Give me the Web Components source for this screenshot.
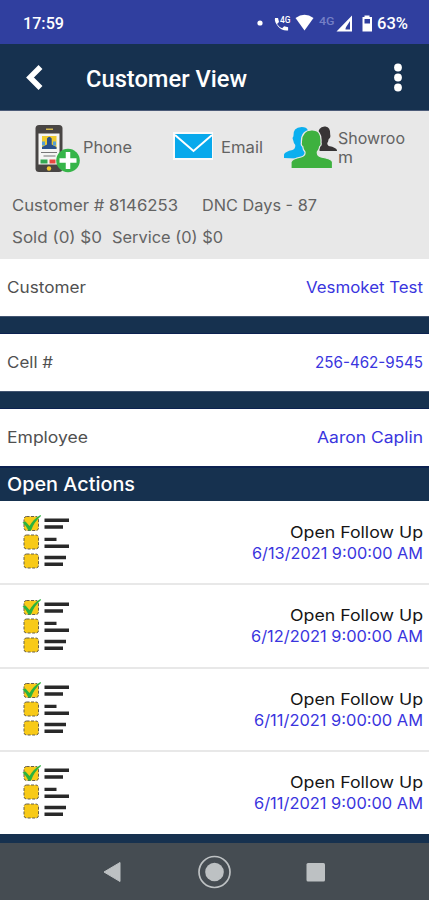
<!DOCTYPE html>
<html lang="en">
<head>
<meta charset="utf-8">
<title>Customer View</title>
<style>
html,body{margin:0;padding:0;background:#16314f}
body{width:429px;height:900px;overflow:hidden;font-family:Inter,"Liberation Sans",sans-serif}
</style>
</head>
<body>
<customer-screen></customer-screen>
<script>
function define(name, html, setup) {
  const t = document.createElement('template');
  t.innerHTML = html;
  customElements.define(name, class extends HTMLElement {
    connectedCallback() {
      if (this.shadowRoot) return;
      this.attachShadow({mode: 'open'}).append(t.content.cloneNode(true));
      if (setup) setup(this, this.shadowRoot);
    }
  });
}

// A single line whose letters are widened to fill the width given in "w".
define('tracked-text', `<style>:host{display:block;white-space:pre;flex:none}span{display:inline-block;transform-origin:0 50%}</style><span></span>`, (el, root) => {
  const s = root.querySelector('span'), w = +el.getAttribute('w');
  s.textContent = el.getAttribute('text');
  const natural = s.getBoundingClientRect().width;
  el.style.width = w + 'px';
  s.style.transform = 'scaleX(' + (w / natural).toFixed(4) + ')';
});

define('status-bar', `<style>
:host{display:flex;height:44px;box-sizing:border-box;background:#303f9f;color:#fff;align-items:center;padding:2px 21px 0 23px;font:500 17px/20px Roboto,sans-serif}
svg{margin-left:auto;display:block}
</style><tracked-text text="17:59" w="41"></tracked-text>
<svg width="116" height="24" viewBox="257 10 116 24" fill="#fff">
<circle cx="260" cy="22" r="2.6"/>
<path d="M275 17l3 .1 1 4-2 1.800q2 3 5.200 4.400l1.900-2 4 1v3.200q-6 .8-10-4t-3.100-8.500z"/>
<text x="280" y="22" font-size="9.500" font-weight="500" textLength="10.500" lengthAdjust="spacingAndGlyphs">4G</text>
<path d="M295.500 17q9-6.500 18 0l-9 12.500z"/>
<text x="319" y="23.500" font-size="11" font-weight="500" fill="#7580c6" textLength="15.500" lengthAdjust="spacingAndGlyphs">4G</text>
<path fill-rule="evenodd" d="M352 14.500v16h-15.500zM350 20l-5.500 8.500h5.500z"/><path d="M345.500 23v6h-4z"/>
<path fill-rule="evenodd" d="M364.500 16v-1.500h5V16h2.500v14.500h-9.500V16zM364.500 18v4.500h5.500V18z"/>
</svg><tracked-text text="63%" w="31" style="margin-left:4px"></tracked-text>`);

define('app-header', `<style>
:host{display:flex;height:67px;box-sizing:border-box;background:#16314f;color:#fff;align-items:center;padding:2px 24px 0 25px;border-bottom:1px solid #4b5b78;font:500 23px/30px Roboto,sans-serif}
svg{display:block}.dots{margin-left:auto}
</style><svg width="20" height="28" viewBox="0 0 20 28"><path d="M15.500 3L5 13.500l10.500 10.500" fill="none" stroke="#fff" stroke-width="5.500"/></svg>
<tracked-text text="Customer View" w="161" style="margin-left:41px;padding-top:3px"></tracked-text>
<svg class="dots" width="14" height="32" viewBox="0 0 14 32" fill="#fff"><circle cx="7" cy="5.500" r="3.900"/><circle cx="7" cy="15.500" r="3.900"/><circle cx="7" cy="25.500" r="3.900"/></svg>`);

define('contact-action', `<style>:host{display:flex;align-items:center;color:#636363}</style><slot name="icon"></slot><slot></slot>`);

define('customer-summary', `<style>
:host{display:block;height:148px;background:#e8e8e8;box-sizing:border-box;padding-top:9px;color:#636363;font-size:15.500px;line-height:20px}
.actions{display:grid;grid-template-columns:139px 138px 152px;height:55px}
svg{display:block;flex:none}
.line{display:flex;padding-left:12px;height:32px;align-items:center}
.first{margin-top:15px}
</style>
<div class="actions">
<contact-action><svg slot="icon" width="49" height="52" viewBox="0 0 49 52" style="margin:0 0 0 34px">
<rect x="1.500" y="3" width="27" height="47" rx="3.500" fill="#484544"/><rect x="4.500" y="11.500" width="21" height="31" fill="#f5f5f3"/><rect x="12" y="6.500" width="7" height="1.500" fill="#d6bb51"/>
<rect x="8" y="14" width="14.500" height="13" fill="#efca2d"/><path d="M8 27v-2l5-2.500v-6q2.300-3.500 4.700 0v6l4.800 2.500v2z" fill="#28508b"/><path d="M8 19.500h3v4H8zm11 0h3v4h-3z" fill="#559fd4"/>
<path d="M7 30.500h16M9.500 34h12" stroke="#777" stroke-width="1.200"/><path d="M6.500 37.500h7v4h-7z" fill="#34a853"/><path d="M15.500 37.500h6v4h-6z" fill="#e74940"/><circle cx="15" cy="46.500" r="2.200" fill="#f5c931"/>
<circle cx="34" cy="38.500" r="11.800" fill="#36b549"/><path d="M34 30v17M25.500 38.500h17" stroke="#fff" stroke-width="4.500"/>
</svg><tracked-text text="Phone" w="49"></tracked-text></contact-action>
<contact-action><svg slot="icon" width="40" height="28" viewBox="0 0 40 28" style="margin:-3px 8px 0 34px"><rect width="40" height="28" fill="#fafafa"/><rect x="2" y="2" width="37" height="24" fill="#08a9ec"/><path d="M2 3l18.500 16L39 3" fill="none" stroke="#fff" stroke-width="2"/></svg><tracked-text text="Email" w="42"></tracked-text></contact-action>
<contact-action><svg slot="icon" width="54" height="44" viewBox="0 0 54 44" style="margin:5px 0 0 6px;align-self:flex-start">
<path fill="#0bafef" d="M1 33v-3.500q1-3 8.500-4.500 3-1 2.800-5-1.800-2-1.900-4l-.8-2.500q0-1.500.8-2-.8-9.300 8.300-9.500 5 0 6 3 2 .5 1.500 7l-4 22.500Q18 32.500 13 33.500z"/>
<path fill="#383536" d="M36 25V8q-1-2 .5-4 2-3 6-2.500 5 .6 4.700 8 .8 3-1.500 4.500-.5 3-1.500 4 0 2 1.500 3 8 1.500 8.300 4.500V26H37z"/>
<path fill="#3eb13f" stroke="#e8e8e8" stroke-width="1.200" d="M8 43.500V37q1-3 10-5 4.500-1 4-5-2-2-2.300-5.500-2-1-1.300-4Q18 5.500 28.500 5T38 17.500q.8 3-1.300 4-.4 3.500-2.400 5.500-.3 4 3.700 5 11 2 11.500 5v6.500z"/>
</svg><div style="padding-left:1px"><tracked-text text="Showroo" w="67" style="height:19px;line-height:19px"></tracked-text><tracked-text text="m" w="15" style="height:19px;line-height:19px"></tracked-text></div></contact-action>
</div>
<div class="line first"><tracked-text text="Customer # 8146253" w="166"></tracked-text><tracked-text text="DNC Days - 87" w="115" style="margin-left:24px"></tracked-text></div>
<div class="line"><tracked-text text="Sold (0) $0" w="90"></tracked-text><tracked-text text="Service (0) $0" w="111" style="margin-left:10px"></tracked-text></div>`);

define('field-row', `<style>
:host{display:flex;justify-content:space-between;align-items:center;height:57px;box-sizing:border-box;background:#fff;padding:1px 6px 0 7px;color:#505050;font-size:15.500px;line-height:20px}
::slotted([slot=value]){color:#3a35de}
</style><slot></slot><slot name="value"></slot>`);

define('section-title', `<style>:host{display:flex;align-items:center;height:35px;box-sizing:border-box;background:#16314f;border-top:2px solid #0c2250;color:#fff;padding:0 0 2px 7px;font:500 18.500px/24px Inter,sans-serif}</style><slot></slot>`);

define('checklist-icon', `<style>:host{display:block}svg{display:block}</style>
<svg width="50" height="58" viewBox="0 0 50 58">
<g fill="#f8ca18" stroke="#69604a" stroke-width="1" stroke-dasharray="3 1.500"><rect x="2" y="3.500" width="14.500" height="14" rx="2.500"/><rect x="2" y="22" width="14.500" height="14" rx="2.500"/><rect x="2" y="41" width="14.500" height="14" rx="2.500"/></g>
<path d="M.500 9.500l3-1 4 4.500Q12 5.500 18.500 2l.500 1Q12 9 9 17.500H6.500Q4 12.500.500 9.500z" fill="#2bb33d"/>
<path d="M22.500 7.200H47M22.500 14H41M22.500 26.400H34.500M22.500 33.200H47M22.500 44.500H44M22.500 51.200H41" stroke="#292929" stroke-width="3.400"/>
</svg>`);

define('action-item', `<style>
:host{display:flex;justify-content:space-between;align-items:center;height:83.300px;box-sizing:border-box;background:#fff;border-bottom:2px solid #e8e8e8;padding:0 6px 0 22px;font-size:16px;line-height:21px}
:host(:first-of-type){height:84.300px}
:host(:last-of-type){height:82.300px;border-bottom-color:#fff}
.copy{display:flex;flex-direction:column;align-items:flex-end;color:#151515;padding-top:1px}
.date{color:#3a35de}
</style><checklist-icon></checklist-icon><div class="copy"><tracked-text text="Open Follow Up" w="133"></tracked-text><div class="date"></div></div>`, (el, root) => {
  const t = document.createElement('tracked-text');
  t.setAttribute('text', el.getAttribute('date'));
  t.setAttribute('w', el.getAttribute('w'));
  root.querySelector('.date').append(t);
});

define('nav-bar', `<style>:host{display:flex;height:57px;background:#454c52;align-items:center;padding-left:103px}svg{display:block}</style>
<svg width="224" height="36" viewBox="0 0 224 36" fill="#bdc1c3"><path d="M1 18L17 8.500v19z" stroke="#bdc1c3" stroke-linejoin="round"/><circle cx="111.500" cy="18" r="15.500" fill="none" stroke="#bdc1c3" stroke-width="1.700"/><circle cx="111.500" cy="18" r="9.300"/><rect x="203.500" y="9" width="18.500" height="18.500" rx="1.500"/></svg>`);

define('band-divider', `<style>:host{display:block;height:18px;box-sizing:border-box;background:#16314f;border-top:1px solid #435571;border-bottom:1px solid #0c2250}</style>`);

define('customer-screen', `<style>
:host{display:flex;flex-direction:column;width:429px;height:900px;overflow:hidden}
:host>*{flex:none}
nav-bar{margin-top:auto}
</style>
<status-bar></status-bar><app-header></app-header><customer-summary></customer-summary>
<field-row><tracked-text text="Customer" w="79"></tracked-text><tracked-text slot="value" text="Vesmoket Test" w="117"></tracked-text></field-row>
<band-divider></band-divider>
<field-row><tracked-text text="Cell #" w="46"></tracked-text><tracked-text slot="value" text="256-462-9545" w="108"></tracked-text></field-row>
<band-divider></band-divider>
<field-row><tracked-text text="Employee" w="81"></tracked-text><tracked-text slot="value" text="Aaron Caplin" w="106"></tracked-text></field-row>
<section-title><tracked-text text="Open Actions" w="128"></tracked-text></section-title>
<div><action-item date="6/13/2021 9:00:00 AM" w="171"></action-item><action-item date="6/12/2021 9:00:00 AM" w="172"></action-item><action-item date="6/11/2021 9:00:00 AM" w="169"></action-item><action-item date="6/11/2021 9:00:00 AM" w="169"></action-item></div>
<nav-bar></nav-bar>`);
</script>
</body>
</html>
